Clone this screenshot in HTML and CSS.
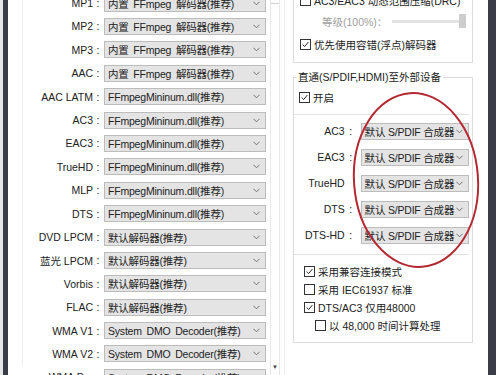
FILE: index.html
```html
<!DOCTYPE html>
<html lang="zh-CN">
<head>
  <meta charset="UTF-8">
  <meta name="viewport" content="width=device-width, initial-scale=1.0">
  <title>音频解码设置</title>
  <link rel="stylesheet" href="styles.css">
</head>
<body>

  <div class="window">
    <div class="edge"></div>
    <div class="rail"></div>

    <!-- left: decoder per codec -->
    <div class="left-pane">
      <div class="codec-list">
        <div class="codec-row"><span class="codec-name">MP1</span><span class="colon">:</span><div class="combo"><span>内置 FFmpeg 解码器(推荐)</span><svg class="chev" viewBox="0 0 8 5"><polyline points="0.5,0.5 4,4 7.5,0.5"/></svg></div></div>
        <div class="codec-row"><span class="codec-name">MP2</span><span class="colon">:</span><div class="combo"><span>内置 FFmpeg 解码器(推荐)</span><svg class="chev" viewBox="0 0 8 5"><polyline points="0.5,0.5 4,4 7.5,0.5"/></svg></div></div>
        <div class="codec-row"><span class="codec-name">MP3</span><span class="colon">:</span><div class="combo"><span>内置 FFmpeg 解码器(推荐)</span><svg class="chev" viewBox="0 0 8 5"><polyline points="0.5,0.5 4,4 7.5,0.5"/></svg></div></div>
        <div class="codec-row"><span class="codec-name">AAC</span><span class="colon">:</span><div class="combo"><span>内置 FFmpeg 解码器(推荐)</span><svg class="chev" viewBox="0 0 8 5"><polyline points="0.5,0.5 4,4 7.5,0.5"/></svg></div></div>
        <div class="codec-row"><span class="codec-name">AAC LATM</span><span class="colon">:</span><div class="combo"><span>FFmpegMininum.dll(推荐)</span><svg class="chev" viewBox="0 0 8 5"><polyline points="0.5,0.5 4,4 7.5,0.5"/></svg></div></div>
        <div class="codec-row"><span class="codec-name">AC3</span><span class="colon">:</span><div class="combo"><span>FFmpegMininum.dll(推荐)</span><svg class="chev" viewBox="0 0 8 5"><polyline points="0.5,0.5 4,4 7.5,0.5"/></svg></div></div>
        <div class="codec-row"><span class="codec-name">EAC3</span><span class="colon">:</span><div class="combo"><span>FFmpegMininum.dll(推荐)</span><svg class="chev" viewBox="0 0 8 5"><polyline points="0.5,0.5 4,4 7.5,0.5"/></svg></div></div>
        <div class="codec-row"><span class="codec-name">TrueHD</span><span class="colon">:</span><div class="combo"><span>FFmpegMininum.dll(推荐)</span><svg class="chev" viewBox="0 0 8 5"><polyline points="0.5,0.5 4,4 7.5,0.5"/></svg></div></div>
        <div class="codec-row"><span class="codec-name">MLP</span><span class="colon">:</span><div class="combo"><span>FFmpegMininum.dll(推荐)</span><svg class="chev" viewBox="0 0 8 5"><polyline points="0.5,0.5 4,4 7.5,0.5"/></svg></div></div>
        <div class="codec-row"><span class="codec-name">DTS</span><span class="colon">:</span><div class="combo"><span>FFmpegMininum.dll(推荐)</span><svg class="chev" viewBox="0 0 8 5"><polyline points="0.5,0.5 4,4 7.5,0.5"/></svg></div></div>
        <div class="codec-row"><span class="codec-name">DVD LPCM</span><span class="colon">:</span><div class="combo"><span>默认解码器(推荐)</span><svg class="chev" viewBox="0 0 8 5"><polyline points="0.5,0.5 4,4 7.5,0.5"/></svg></div></div>
        <div class="codec-row"><span class="codec-name">蓝光 LPCM</span><span class="colon">:</span><div class="combo"><span>默认解码器(推荐)</span><svg class="chev" viewBox="0 0 8 5"><polyline points="0.5,0.5 4,4 7.5,0.5"/></svg></div></div>
        <div class="codec-row"><span class="codec-name">Vorbis</span><span class="colon">:</span><div class="combo"><span>默认解码器(推荐)</span><svg class="chev" viewBox="0 0 8 5"><polyline points="0.5,0.5 4,4 7.5,0.5"/></svg></div></div>
        <div class="codec-row"><span class="codec-name">FLAC</span><span class="colon">:</span><div class="combo"><span>默认解码器(推荐)</span><svg class="chev" viewBox="0 0 8 5"><polyline points="0.5,0.5 4,4 7.5,0.5"/></svg></div></div>
        <div class="codec-row"><span class="codec-name">WMA V1</span><span class="colon">:</span><div class="combo"><span>System DMO Decoder(推荐)</span><svg class="chev" viewBox="0 0 8 5"><polyline points="0.5,0.5 4,4 7.5,0.5"/></svg></div></div>
        <div class="codec-row"><span class="codec-name">WMA V2</span><span class="colon">:</span><div class="combo"><span>System DMO Decoder(推荐)</span><svg class="chev" viewBox="0 0 8 5"><polyline points="0.5,0.5 4,4 7.5,0.5"/></svg></div></div>
        <div class="codec-row"><span class="codec-name">WMA Pro</span><span class="colon">:</span><div class="combo"><span>System DMO Decoder(推荐)</span><svg class="chev" viewBox="0 0 8 5"><polyline points="0.5,0.5 4,4 7.5,0.5"/></svg></div></div>
      </div>
    </div>

    <div class="scrollbar">
      <div class="thumb"></div>
      <div class="arrow-down">&#9660;</div>
    </div>

    <!-- right: output options -->
    <div class="right-pane">
      <div class="group group-drc">
        <div class="check-row drc-row"><span class="box"></span><span>AC3/EAC3 动态范围压缩(DRC)</span></div>
        <div class="level-row">
          <span class="level-label">等级(100%)：</span>
          <div class="slider"><div class="track"></div><div class="knob"></div></div>
        </div>
        <div class="check-row float-row"><span class="box"><svg viewBox="0 0 11 11"><polyline points="2,5.5 4.5,8 9,2.5"/></svg></span><span>优先使用容错(浮点)解码器</span></div>
      </div>

      <fieldset class="group group-pass">
        <legend>直通(S/PDIF,HDMI)至外部设备</legend>
        <div class="check-row enable-row"><span class="box"><svg viewBox="0 0 11 11"><polyline points="2,5.5 4.5,8 9,2.5"/></svg></span><span>开启</span></div>

        <div class="spdif-list">
          <div class="spdif-row"><span class="spdif-name">AC3</span><span class="colon">:</span><div class="combo"><span>默认 S/PDIF 合成器</span><svg class="chev" viewBox="0 0 8 5"><polyline points="0.5,0.5 4,4 7.5,0.5"/></svg></div></div>
          <div class="spdif-row"><span class="spdif-name">EAC3</span><span class="colon">:</span><div class="combo"><span>默认 S/PDIF 合成器</span><svg class="chev" viewBox="0 0 8 5"><polyline points="0.5,0.5 4,4 7.5,0.5"/></svg></div></div>
          <div class="spdif-row"><span class="spdif-name">TrueHD</span><span class="colon"></span><div class="combo"><span>默认 S/PDIF 合成器</span><svg class="chev" viewBox="0 0 8 5"><polyline points="0.5,0.5 4,4 7.5,0.5"/></svg></div></div>
          <div class="spdif-row"><span class="spdif-name">DTS</span><span class="colon">:</span><div class="combo"><span>默认 S/PDIF 合成器</span><svg class="chev" viewBox="0 0 8 5"><polyline points="0.5,0.5 4,4 7.5,0.5"/></svg></div></div>
          <div class="spdif-row"><span class="spdif-name">DTS-HD</span><span class="colon">:</span><div class="combo"><span>默认 S/PDIF 合成器</span><svg class="chev" viewBox="0 0 8 5"><polyline points="0.5,0.5 4,4 7.5,0.5"/></svg></div></div>
        </div>

        <div class="options">
          <div class="check-row"><span class="box"><svg viewBox="0 0 11 11"><polyline points="2,5.5 4.5,8 9,2.5"/></svg></span><span>采用兼容连接模式</span></div>
          <div class="check-row"><span class="box"></span><span>采用 IEC61937 标准</span></div>
          <div class="check-row"><span class="box"><svg viewBox="0 0 11 11"><polyline points="2,5.5 4.5,8 9,2.5"/></svg></span><span>DTS/AC3 仅用48000</span></div>
          <div class="check-row indent"><span class="box"></span><span>以 48,000 时间计算处理</span></div>
        </div>
      </fieldset>
    </div>

    <div class="rail"></div>

    <!-- hand-drawn red mark -->
    <svg class="mark" viewBox="0 0 140 190"><ellipse cx="67" cy="92" rx="62" ry="87" transform="rotate(-4 67 92)"/></svg>
  </div>

</body>
</html>
```

FILE: styles.css
```css
body {
  margin: 0;
  padding: 0;
  background-color: #fff;
  font-family: "Liberation Sans", "Noto Sans CJK SC", sans-serif;
  font-size: 10.5px;
  color: #222;
}

.window {
  position: relative;
  display: flex;
  width: 500px;
  height: 375px;
  overflow: hidden;
}

.edge {
  width: 3px;
  background-color: #e6e6e8;
}

.rail {
  width: 5px;
  background-color: #3a3d48;
}

.window > .rail:last-of-type {
  width: 8px;
}

/* left pane */
.left-pane {
  width: 262px;
  padding-left: 14px;
  box-sizing: border-box;
}

.codec-list {
  border-left: 1px solid #efefef;
  height: 100%;
}

.codec-list .codec-row:first-child {
  margin-top: -8.6px;
}

.codec-row {
  display: flex;
  align-items: center;
  height: 23.4px;
}

.codec-name {
  width: 70px;
  text-align: right;
  white-space: nowrap;
}

.colon {
  width: 10px;
  text-align: center;
}

.combo {
  display: flex;
  align-items: center;
  justify-content: space-between;
  height: 17px;
  box-sizing: border-box;
  padding: 0 5px 0 3px;
  background-color: #e4e4e4;
  border: 1px solid #bcbcbc;
  white-space: nowrap;
  letter-spacing: -0.2px;
}

.codec-row .combo {
  width: 162px;
  margin-left: 1px;
  word-spacing: 2px;
}

.chev {
  flex-shrink: 0;
  width: 7px;
  height: 5px;
  fill: none;
  stroke: #666;
  stroke-width: 1;
}

/* scrollbar */
.scrollbar {
  position: relative;
  width: 8px;
  border-left: 1px solid #e8e8e8;
  border-right: 1px solid #e8e8e8;
  display: flex;
  flex-direction: column;
  justify-content: space-between;
}

.thumb {
  height: 3px;
  border-bottom: 1px solid #cfcfcf;
}

.arrow-down {
  height: 10px;
  font-size: 6px;
  line-height: 10px;
  text-align: center;
  color: #444;
  margin-bottom: 3px;
}

/* right pane */
.right-pane {
  width: 204px;
  margin-left: 4px;
  border-left: 1px solid #ededed;
  box-sizing: border-box;
  padding: 0 15px 0 8px;
}

.group {
  border: 1px solid #dcdcdc;
}

.group-drc {
  margin-top: -12px;
  padding: 0 0 5px 6px;
}

.check-row {
  display: flex;
  align-items: center;
  gap: 3px;
  white-space: nowrap;
}

.box {
  flex-shrink: 0;
  width: 11px;
  height: 11px;
  border: 1px solid #333;
  box-sizing: border-box;
  background-color: #fff;
  display: flex;
}

.box svg {
  width: 100%;
  height: 100%;
  fill: none;
  stroke: #222;
  stroke-width: 1.2;
}

.drc-row {
  height: 22px;
}

.level-row {
  display: flex;
  align-items: center;
  height: 20px;
  padding-left: 22px;
}

.level-label {
  color: #a0a0a0;
  width: 70px;
}

.slider {
  position: relative;
  display: flex;
  align-items: center;
  width: 74px;
  height: 14px;
}

.track {
  width: 100%;
  height: 3px;
  background-color: #e2e2e2;
}

.knob {
  position: absolute;
  right: 0;
  top: 0;
  width: 7px;
  height: 14px;
  background-color: #cdcdcd;
}

.float-row {
  height: 26px;
}

.group-pass {
  margin: 6px 0 0;
  padding: 0 0 7px;
  min-width: 0;
}

.group-pass legend {
  padding: 0 2px;
  margin-left: 2px;
  line-height: 16px;
}

.enable-row {
  height: 24px;
  padding-left: 5px;
}

.spdif-list {
  margin: 5px 3px 0 0;
  padding: 3px 0 6px;
  border-top: 1px solid #e2e2e2;
  border-bottom: 1px solid #e2e2e2;
}

.spdif-row {
  display: flex;
  align-items: center;
  height: 26px;
}

.spdif-name {
  width: 51px;
  text-align: right;
}

.spdif-row .colon {
  width: 12px;
}

.spdif-row .combo {
  width: 109px;
  margin-left: 4px;
}

.options {
  margin-top: 7px;
  padding-left: 10px;
}

.options .check-row {
  height: 18px;
}

.options .indent {
  height: 19px;
  padding-left: 11px;
}

/* red annotation circle */
.mark {
  position: absolute;
  left: 349px;
  top: 88px;
  width: 140px;
  height: 190px;
  fill: none;
  stroke: #b42a33;
  stroke-width: 2;
}
```
